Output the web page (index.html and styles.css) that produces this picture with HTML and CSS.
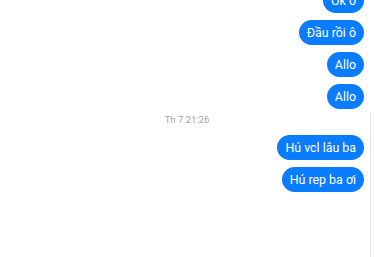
FILE: index.html
```html
<!DOCTYPE html>
<html lang="vi">
<head>
    <meta charset="UTF-8">
    <meta name="viewport" content="width=device-width, initial-scale=1.0">
    <title>Chat</title>
    <link rel="stylesheet" href="styles.css">
</head>
<body>
    <div class="chat">
        <div class="bubble">Ok ô</div>
        <div class="bubble">Đầu rồi ô</div>
        <div class="bubble">Allo</div>
        <div class="bubble">Allo</div>
        <div class="time">Th 7 21:26</div>
        <div class="bubble">Hú vcl lâu ba</div>
        <div class="bubble">Hú rep ba ơi</div>
    </div>
    <div class="track"></div>
</body>
</html>
```

FILE: styles.css
```css
body {
    margin: 0;
    background: #fff;
    font-family: Roboto, "Noto Sans", sans-serif;
    overflow: hidden;
    height: 257px;
}

.chat {
    display: flex;
    flex-direction: column;
    align-items: flex-end;
    gap: 7px;
    margin-top: -12px;
    padding-right: 10px;
}

.bubble {
    background-color: #0a7cff;
    color: #fff;
    font-size: 12.4px;
    line-height: 17px;
    padding: 4px 8px;
    border-radius: 13px;
}

.time {
    align-self: stretch;
    margin: -2px -10px 2px 0;
    text-align: center;
    font-size: 9.5px;
    line-height: 12px;
    color: #a4a4a4;
}

/* scroll track at the right edge */
.track {
    position: fixed;
    right: 3px;
    top: 112px;
    bottom: 0;
    width: 1px;
    background: #e4e4e4;
}
```
